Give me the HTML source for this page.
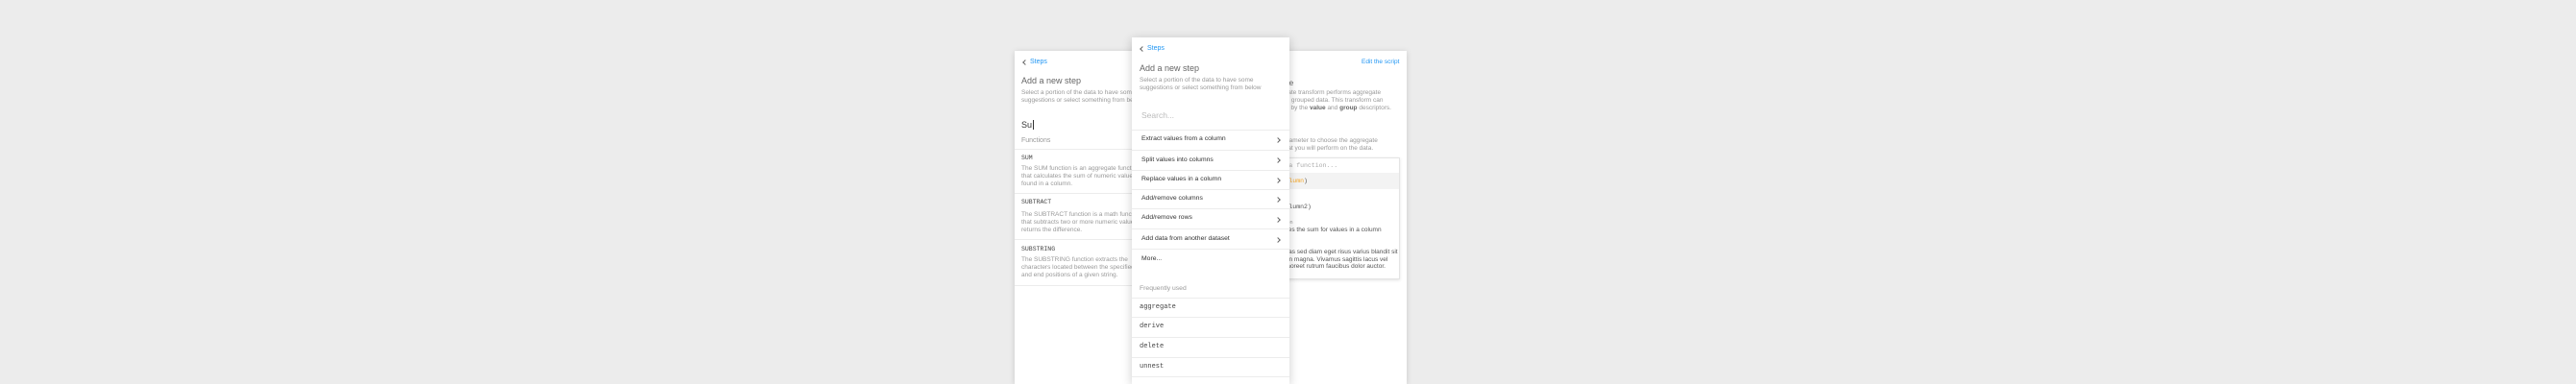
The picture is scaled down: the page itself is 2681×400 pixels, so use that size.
<!DOCTYPE html>
<html style="width:2681px;height:400px;overflow:hidden"><head><meta charset="utf-8"><style>
*{margin:0;padding:0;box-sizing:border-box}
body{width:2681px;height:400px;background:#ececec;font-family:"Liberation Sans",sans-serif;position:relative;overflow:hidden;color:#444}
.card{position:absolute;background:#fff;box-shadow:0 1px 6px rgba(0,0,0,.15);bottom:0}
.t{position:absolute;white-space:nowrap}
.s{font-size:6.5px;color:#999;line-height:8px}
.mono{font-family:"Liberation Mono",monospace}
.hr{position:absolute;height:1px;background:#ececec}
.blue{color:#2196f3}
.chev{position:absolute;width:4px;height:4px;border-right:1px solid #666;border-top:1px solid #666;transform:rotate(45deg)}
.back{position:absolute;width:4px;height:4px;border-left:1px solid #666;border-bottom:1px solid #666;transform:rotate(45deg)}
.m{color:#333}
</style></head><body>

<div class="card" style="left:1056px;top:53px;width:140px;z-index:1">
 <div class="back" style="left:9px;top:10px"></div>
 <div class="t blue" style="left:16px;top:8px;font-size:7px">Steps</div>
 <div class="t" style="left:7px;top:26px;font-size:9px;color:#666">Add a new step</div>
 <div class="t s" style="left:7px;top:40px">Select a portion of the data to have some<br>suggestions or select something from below</div>
 <div class="t" style="left:7px;top:72px;font-size:9px;color:#333">Su<span style="border-left:1px solid #333;margin-left:1px"></span></div>
 <div class="t s" style="left:7px;top:90px;font-size:7px">Functions</div>
 <div class="hr" style="left:0;right:0;top:102px"></div>
 <div class="t mono" style="left:7px;top:108px;font-size:6.5px;color:#444">SUM</div>
 <div class="t s" style="left:7px;top:119px">The SUM function is an aggregate function<br>that calculates the sum of numeric values<br>found in a column.</div>
 <div class="hr" style="left:0;right:0;top:148px"></div>
 <div class="t mono" style="left:7px;top:154px;font-size:6.5px;color:#444">SUBTRACT</div>
 <div class="t s" style="left:7px;top:167px">The SUBTRACT function is a math function<br>that subtracts two or more numeric values and<br>returns the difference.</div>
 <div class="hr" style="left:0;right:0;top:196px"></div>
 <div class="t mono" style="left:7px;top:203px;font-size:6.5px;color:#444">SUBSTRING</div>
 <div class="t s" style="left:7px;top:214px">The SUBSTRING function extracts the<br>characters located between the specified start<br>and end positions of a given string.</div>
 <div class="hr" style="left:0;right:0;top:244px"></div>
</div>

<div class="card" style="left:1300px;top:53px;width:164px;z-index:1">
 <div class="t blue" style="left:117px;top:8px;font-size:6.5px">Edit the script</div>
 <div class="t" style="left:7px;top:28px;font-size:8.5px;color:#666">Aggregate</div>
 <div class="t s" style="left:7px;top:40px">The aggregate transform performs aggregate<br>functions on grouped data. This transform can<br>be specified by the <b style="color:#666">value</b> and <b style="color:#666">group</b> descriptors.</div>
 <div class="t s" style="left:7px;top:90px">Use this parameter to choose the aggregate<br>functions that you will perform on the data.</div>
 <div style="position:absolute;left:7px;right:7px;top:111px;height:127px;border:1px solid #e4e4e4;box-shadow:0 1px 3px rgba(0,0,0,.12);background:#fff">
  <div class="t mono s" style="left:10px;top:4px;color:#aaa">Enter a function...</div>
  <div style="position:absolute;left:0;right:0;top:15px;height:17px;background:#f3f3f3"></div>
  <div class="t mono" style="left:10px;top:20px;font-size:6.5px;color:#555">sum(<span style="color:#f5a623">column</span>)</div>
  <div class="t s" style="left:10px;top:38px;font-size:5.5px">Example</div>
  <div class="t mono" style="left:10px;top:47px;font-size:6.5px;color:#555">sum(column2)</div>
  <div class="t s" style="left:10px;top:63px;font-size:5.5px">Description</div>
  <div class="t s" style="left:10px;top:71px;color:#555">Computes the sum for values in a column</div>
  <div class="t" style="left:10px;top:86px;font-size:5.5px;color:#f5a623">column</div>
  <div class="t s" style="left:10px;top:94px;color:#555;line-height:7.5px">Maecenas sed diam eget risus varius blandit sit<br>amet non magna. Vivamus sagittis lacus vel<br>augue laoreet rutrum faucibus dolor auctor.</div>
 </div>
</div>

<div class="card" style="left:1178px;top:39px;width:164px;z-index:2;box-shadow:0 2px 10px rgba(0,0,0,.2)">
 <div class="back" style="left:9px;top:10px"></div>
 <div class="t blue" style="left:16px;top:8px;font-size:7px">Steps</div>
 <div class="t" style="left:8px;top:27px;font-size:9px;color:#666">Add a new step</div>
 <div class="t s" style="left:8px;top:41px">Select a portion of the data to have some<br>suggestions or select something from below</div>
 <div class="t" style="left:10px;top:76px;font-size:8.5px;color:#bbb">Search...</div>
 <div class="hr" style="left:0;right:0;top:96px"></div>
 <div class="t m" style="left:10px;top:102px;font-size:6.8px">Extract values from a column</div><div class="chev" style="left:150px;top:105px"></div>
 <div class="hr" style="left:0;right:0;top:117px"></div>
 <div class="t m" style="left:10px;top:124px;font-size:6.8px">Split values into columns</div><div class="chev" style="left:150px;top:126px"></div>
 <div class="hr" style="left:0;right:0;top:138px"></div>
 <div class="t m" style="left:10px;top:144px;font-size:6.8px">Replace values in a column</div><div class="chev" style="left:150px;top:147px"></div>
 <div class="hr" style="left:0;right:0;top:158px"></div>
 <div class="t m" style="left:10px;top:164px;font-size:6.8px">Add/remove columns</div><div class="chev" style="left:150px;top:167px"></div>
 <div class="hr" style="left:0;right:0;top:178px"></div>
 <div class="t m" style="left:10px;top:184px;font-size:6.8px">Add/remove rows</div><div class="chev" style="left:150px;top:188px"></div>
 <div class="hr" style="left:0;right:0;top:199px"></div>
 <div class="t m" style="left:10px;top:206px;font-size:6.8px">Add data from another dataset</div><div class="chev" style="left:150px;top:209px"></div>
 <div class="hr" style="left:0;right:0;top:220px"></div>
 <div class="t m" style="left:10px;top:227px;font-size:6.8px">More...</div>
 <div class="t s" style="left:8px;top:258px;font-size:6.8px">Frequently used</div>
 <div class="hr" style="left:0;right:0;top:271px"></div>
 <div class="t mono" style="left:8px;top:277px;font-size:7px;color:#444">aggregate</div>
 <div class="hr" style="left:0;right:0;top:291px"></div>
 <div class="t mono" style="left:8px;top:297px;font-size:7px;color:#444">derive</div>
 <div class="hr" style="left:0;right:0;top:312px"></div>
 <div class="t mono" style="left:8px;top:318px;font-size:7px;color:#444">delete</div>
 <div class="hr" style="left:0;right:0;top:333px"></div>
 <div class="t mono" style="left:8px;top:339px;font-size:7px;color:#444">unnest</div>
 <div class="hr" style="left:0;right:0;top:353px"></div>
</div>
</body></html>
